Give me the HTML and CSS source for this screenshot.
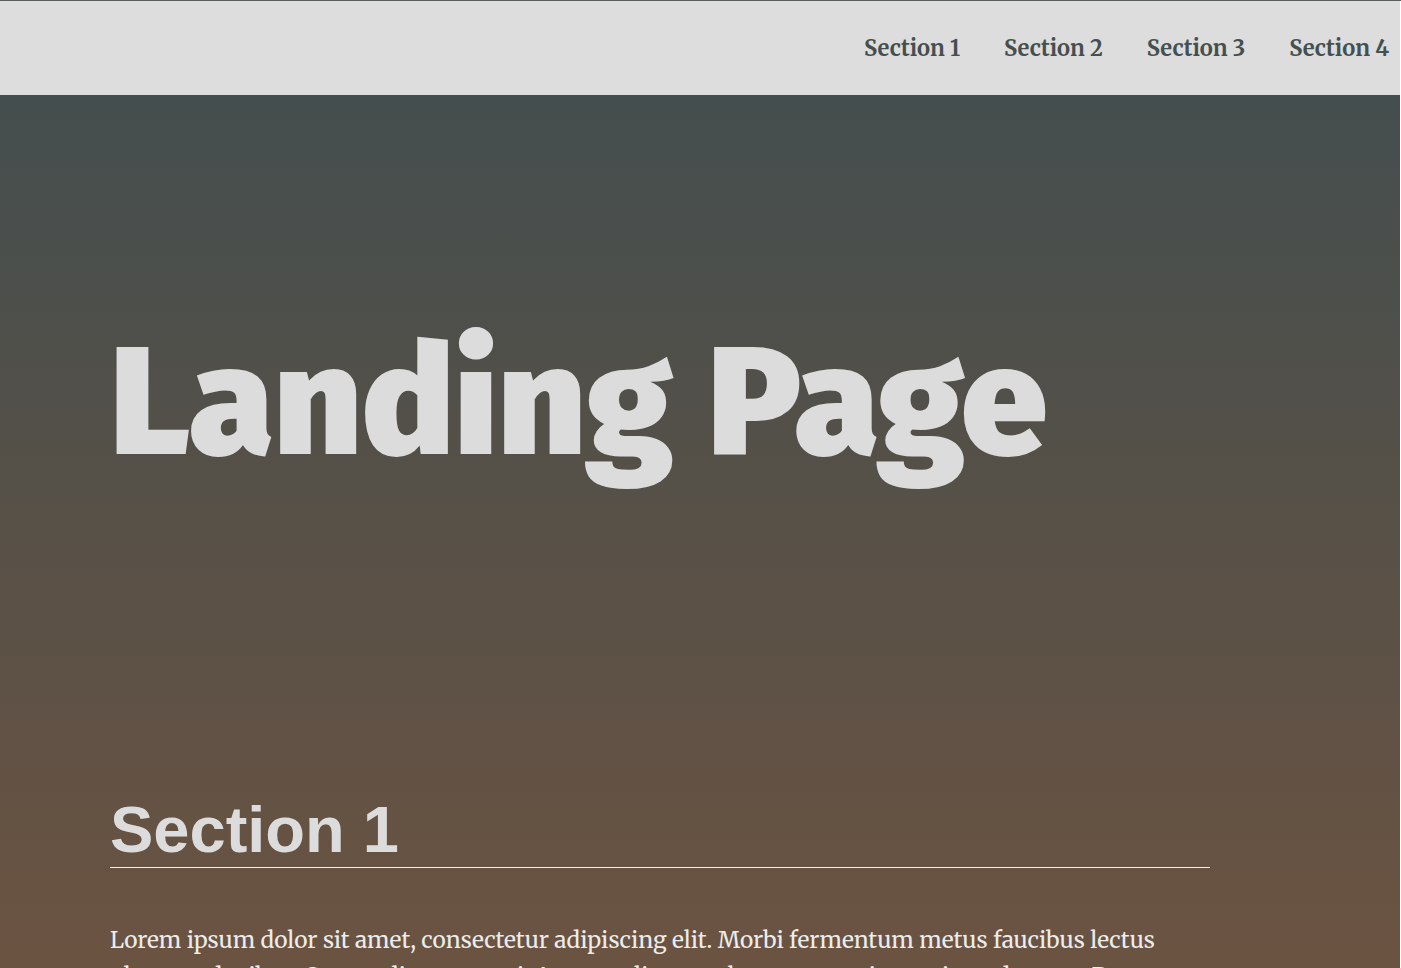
FILE: index.html
```html
<!DOCTYPE html>
<html lang="en">
<head>
<meta charset="utf-8">
<title>Landing Page</title>
<link rel="stylesheet" href="styles.css">
</head>
<body>
<header class="page-header">
  <nav class="navbar">
    <ul class="navbar-list">
      <li><a class="menu-link" href="#section1">Section 1</a></li>
      <li><a class="menu-link" href="#section2">Section 2</a></li>
      <li><a class="menu-link" href="#section3">Section 3</a></li>
      <li><a class="menu-link" href="#section4">Section 4</a></li>
    </ul>
  </nav>
</header>
<main class="page-main">
  <header class="hero">
    <h1 class="hero-title">Landing Page</h1>
  </header>
  <section class="section" id="section1">
    <h2 class="section-title">Section 1</h2>
    <p class="section-text">Lorem ipsum dolor sit amet, consectetur adipiscing elit. Morbi fermentum metus faucibus lectus pharetra dapibus. Suspendisse potenti. Aenean aliquam elementum mi, ac euismod augue. Donec eget lacinia ex. Phasellus imperdiet porta orci eget mollis. Sed convallis sollicitudin mauris ac tincidunt. Donec bibendum, nulla eget bibendum consectetur, sem nisi aliquam leo, ut pulvinar quam nunc eu augue. Pellentesque maximus imperdiet elit a pharetra. Duis lectus mi, aliquam in mi quis, aliquam porttitor lacus. Morbi a tincidunt felis.</p>
  </section>
</main>
</body>
</html>
```
FILE: styles.css
```css
html {
  background: #ffffff;
  border-top: 1px solid #5a5d5e;
}

body {
  margin: 0;
  width: 1400px;
  font-family: Merriweather, "DejaVu Serif", serif;
}

.page-header {
  background: #dddddd;
  height: 94px;
  box-sizing: border-box;
  padding: 34px 11px 0 0;
}

.navbar-list {
  list-style: none;
  margin: 0;
  padding: 0;
  display: flex;
  justify-content: flex-end;
  gap: 44px;
}

.menu-link {
  display: block;
  font-family: Merriweather, "DejaVu Serif Condensed", serif;
  font-weight: bold;
  font-size: 21.8px;
  line-height: 28px;
  color: #454f4f;
  text-decoration: none;
}

.page-main {
  height: 873px;
  overflow: hidden;
  background: linear-gradient(to bottom, #444e4e 0%, #6b5341 100%);
  padding: 0 110px;
  box-sizing: border-box;
}

.hero {
  padding-top: 215px;
}

.hero-title {
  margin: 0;
  font-family: "Fira Sans", Lato, sans-serif;
  font-weight: 900;
  font-size: 154px;
  line-height: 186px;
  color: #dcdcdc;
}

.section {
  width: 1100px;
  padding-top: 297px;
}

.section-title {
  margin: 0;
  font-family: "Liberation Sans", Arial, sans-serif;
  font-weight: bold;
  font-size: 65px;
  line-height: 74px;
  color: #dcdcdc;
  border-bottom: 1px solid #eeeeee;
}

.section-text {
  margin: 54px 0 0;
  font-size: 22.65px;
  line-height: 36px;
  color: #ececec;
}
```
